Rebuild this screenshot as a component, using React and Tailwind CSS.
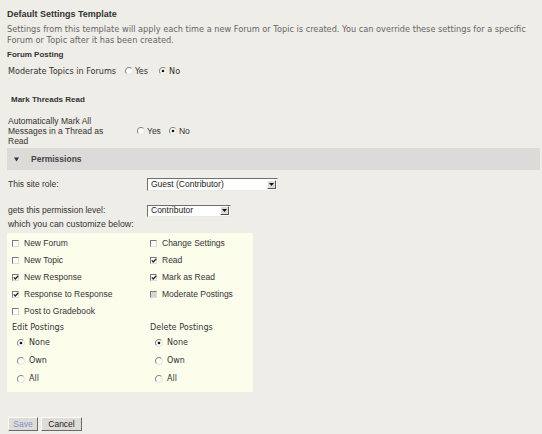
import React from "react";

const verdana = { fontFamily: '"DejaVu Sans", Verdana, sans-serif' };

const Radio = ({ checked = false }) => (
  <svg width="8" height="8" viewBox="0 0 8 8" className="shrink-0">
    <circle cx="4" cy="4" r="3.4" fill="#fbfbf6" />
    <path d="M1.4 6.6 A3.6 3.6 0 0 1 6.6 1.4" fill="none" stroke="#7a7a7a" strokeWidth="1" />
    <path d="M6.6 1.4 A3.6 3.6 0 0 1 1.4 6.6" fill="none" stroke="#e4e4e0" strokeWidth="1" />
    {checked && <circle cx="4" cy="4" r="1.3" fill="#111" />}
  </svg>
);

const Checkbox = ({ checked = false, disabled = false }) => (
  <span
    className={`relative shrink-0 w-[7px] h-[7px] border-t border-l border-t-[#7b7b7b] border-l-[#7b7b7b] border-b border-r border-b-[#dcdcdc] border-r-[#dcdcdc] ${
      disabled ? "bg-[#d6d6d2]" : "bg-white"
    }`}
  >
    {checked && (
      <svg width="6" height="6" viewBox="0 0 6 6" className="absolute left-0 top-0">
        <path d="M0.8 2.4 L2.3 4 L5.3 0.8" fill="none" stroke="#222" strokeWidth="1.3" />
      </svg>
    )}
  </span>
);

const Select = ({ value, width }) => (
  <div
    className={`flex items-center bg-white border border-t-[#6f6f6f] border-l-[#6f6f6f] border-b-[#e8e8e8] border-r-[#e8e8e8] ${width}`}
  >
    <span className="flex-1 pl-[3px] text-[8.5px] text-[#222] leading-none">{value}</span>
    <span className="w-[9px] h-[9px] mr-[1px] bg-[#dedbd4] border border-t-white border-l-white border-b-[#555] border-r-[#555] flex items-center justify-center">
      <svg width="5" height="3" viewBox="0 0 5 3">
        <path d="M0 0 L5 0 L2.5 3 Z" fill="#111" />
      </svg>
    </span>
  </div>
);

const CheckRow = ({ label, checked, disabled }) => (
  <div className="h-[17px] flex items-center gap-[5px]">
    <Checkbox checked={checked} disabled={disabled} />
    <span className="text-[8.5px] text-[#333]">{label}</span>
  </div>
);

const RadioRow = ({ label, checked }) => (
  <div className="h-[18px] flex items-center gap-[4px] pl-[5px]">
    <Radio checked={checked} />
    <span className="text-[8px] text-[#333]" style={verdana}>
      {label}
    </span>
  </div>
);

export default function App() {
  return (
    <div
      className="w-[542px] h-[434px] overflow-hidden bg-[#efede7] pt-[8px] pl-[7px]"
      style={{ fontFamily: '"Liberation Sans", Arial, sans-serif' }}
    >
      <div className="h-[14px] flex items-center text-[9px] font-bold text-[#333]">
        Default Settings Template
      </div>
      <p className="mt-[2px] text-[8.2px] leading-[11px] text-[#666] whitespace-nowrap" style={verdana}>
        Settings from this template will apply each time a new Forum or Topic is created. You can override these
        settings for a specific
        <br />
        Forum or Topic after it has been created.
      </p>

      <div className="mt-[3px] h-[12px] flex items-center text-[8px] font-bold text-[#333]">Forum Posting</div>
      <div className="mt-[3px] h-[14px] flex items-center text-[8.1px] text-[#333] whitespace-nowrap" style={verdana}>
        <span className="pl-[1px] w-[118px]">Moderate Topics in Forums</span>
        <span className="flex items-center gap-[2px]">
          <Radio /> Yes
        </span>
        <span className="flex items-center gap-[2px] ml-[11px]">
          <Radio checked /> No
        </span>
      </div>

      <div className="mt-[16px] h-[12px] pl-[4px] flex items-center text-[8px] font-bold text-[#333]">
        Mark Threads Read
      </div>
      <div className="mt-[10px] flex items-center text-[8.5px] text-[#333]">
        <span className="w-[130px] pl-[1px] leading-[10px]">
          Automatically Mark All
          <br />
          Messages in a Thread as
          <br />
          Read
        </span>
        <span className="flex items-center gap-[2px]">
          <Radio /> Yes
        </span>
        <span className="flex items-center gap-[2px] ml-[8px]">
          <Radio checked /> No
        </span>
      </div>

      <div className="mt-[2px] h-[22px] w-[533px] bg-[#dcdbda] flex items-center pl-[7px] gap-[12px]">
        <svg width="5" height="5" viewBox="0 0 6 5">
          <path d="M0 0 L6 0 L3 5 Z" fill="#333" />
        </svg>
        <span className="text-[8.5px] font-bold text-[#444]">Permissions</span>
      </div>

      <div className="mt-[7px] h-[15px] flex items-center text-[8.5px] text-[#333]">
        <span className="w-[140px] pl-[1px]">This site role:</span>
        <Select value="Guest (Contributor)" width="w-[131px] h-[13px]" />
      </div>
      <div className="mt-[12px] h-[13px] flex items-center text-[8.5px] text-[#333]">
        <span className="w-[140px] pl-[1px]">gets this permission level:</span>
        <Select value="Contributor" width="w-[84px] h-[12px]" />
      </div>

      <div className="mt-[2px] h-[12px] pl-[1px] flex items-center text-[8.8px] text-[#333]">
        which you can customize below:
      </div>

      <div className="mt-[2px] w-[246px] h-[159px] bg-[#fdfdec] pt-[2px] pl-[5px]">
        <div className="grid grid-cols-[138px_1fr]">
          <div>
            <CheckRow label="New Forum" />
            <CheckRow label="New Topic" />
            <CheckRow label="New Response" checked />
            <CheckRow label="Response to Response" checked />
            <CheckRow label="Post to Gradebook" />
          </div>
          <div>
            <CheckRow label="Change Settings" />
            <CheckRow label="Read" checked />
            <CheckRow label="Mark as Read" checked />
            <CheckRow label="Moderate Postings" disabled />
          </div>
        </div>
        <div className="grid grid-cols-[138px_1fr]">
          <div>
            <div className="h-[14px] flex items-center text-[8.1px] text-[#333]" style={verdana}>
              Edit Postings
            </div>
            <RadioRow label="None" checked />
            <RadioRow label="Own" />
            <RadioRow label="All" />
          </div>
          <div>
            <div className="h-[14px] flex items-center text-[8.1px] text-[#333]" style={verdana}>
              Delete Postings
            </div>
            <RadioRow label="None" checked />
            <RadioRow label="Own" />
            <RadioRow label="All" />
          </div>
        </div>
      </div>

      <div className="mt-[25px] pl-[1px] flex gap-[3px]">
        <button className="w-[30px] h-[14px] bg-[#dedcd6] border border-t-white border-l-white border-b-[#6a6a6a] border-r-[#6a6a6a] text-[8.5px] text-[#7f8fcf] leading-none">
          Save
        </button>
        <button className="w-[41px] h-[14px] bg-[#dedcd6] border border-t-white border-l-white border-b-[#6a6a6a] border-r-[#6a6a6a] text-[8.5px] text-[#222] leading-none">
          Cancel
        </button>
      </div>
    </div>
  );
}
